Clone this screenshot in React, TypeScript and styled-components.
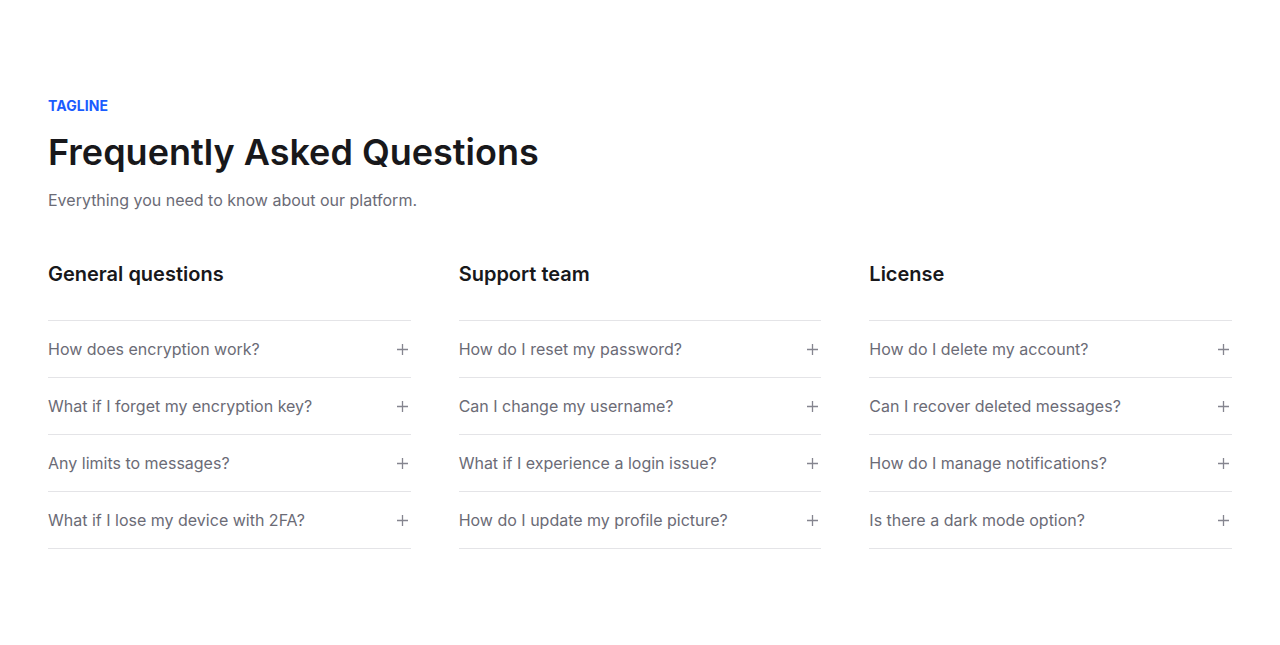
import React from "react";
import styled, { createGlobalStyle } from "styled-components";

const Global = createGlobalStyle`
  html, body { margin: 0; padding: 0; background: #ffffff; }
  body { font-family: Inter, "Noto Sans", sans-serif; -webkit-font-smoothing: antialiased; }
  * { box-sizing: border-box; }
`;

const Section = styled.section`
  padding: 96px 48px 96px;
  display: flex;
  flex-direction: column;
`;

const Tagline = styled.div`
  font-size: 14px;
  line-height: 20px;
  font-weight: 700;
  color: #1a5cff;
  letter-spacing: 0.1px;
`;

const Title = styled.h1`
  margin: 14px 0 0;
  font-size: 36px;
  line-height: 44px;
  font-weight: 600;
  color: #18181b;
  letter-spacing: 0;
`;

const Subtitle = styled.p`
  margin: 14px 0 0;
  font-size: 16px;
  line-height: 24px;
  color: #6b6b76;
`;

const Columns = styled.div`
  margin-top: 48px;
  display: grid;
  grid-template-columns: repeat(3, 1fr);
  column-gap: 48px;
`;

const Column = styled.div`
  display: flex;
  flex-direction: column;
`;

const ColumnTitle = styled.h2`
  margin: 0 0 32px;
  font-size: 20px;
  line-height: 28px;
  font-weight: 600;
  color: #18181b;
`;

const List = styled.div`
  display: flex;
  flex-direction: column;
  border-bottom: 1px solid #e4e4e7;
`;

const Row = styled.button`
  all: unset;
  box-sizing: border-box;
  cursor: pointer;
  display: flex;
  align-items: center;
  justify-content: space-between;
  height: 57px;
  border-top: 1px solid #e4e4e7;
  font-family: Inter, "Noto Sans", sans-serif;
  font-size: 16px;
  line-height: 24px;
  color: #6b6b76;
`;

const PlusIcon = styled.svg`
  width: 11px;
  height: 11px;
  margin-right: 3px;
  flex: none;
`;

const Plus = () => (
  <PlusIcon viewBox="0 0 11 11" fill="none">
    <path d="M5.5 0v11M0 5.5h11" stroke="#85858f" strokeWidth="1.3" />
  </PlusIcon>
);

const data = [
  {
    title: "General questions",
    items: [
      "How does encryption work?",
      "What if I forget my encryption key?",
      "Any limits to messages?",
      "What if I lose my device with 2FA?",
    ],
  },
  {
    title: "Support team",
    items: [
      "How do I reset my password?",
      "Can I change my username?",
      "What if I experience a login issue?",
      "How do I update my profile picture?",
    ],
  },
  {
    title: "License",
    items: [
      "How do I delete my account?",
      "Can I recover deleted messages?",
      "How do I manage notifications?",
      "Is there a dark mode option?",
    ],
  },
];

export default function App() {
  return (
    <>
      <Global />
      <Section>
        <Tagline>TAGLINE</Tagline>
        <Title>Frequently Asked Questions</Title>
        <Subtitle>Everything you need to know about our platform.</Subtitle>
        <Columns>
          {data.map((col) => (
            <Column key={col.title}>
              <ColumnTitle>{col.title}</ColumnTitle>
              <List>
                {col.items.map((q) => (
                  <Row key={q}>
                    <span>{q}</span>
                    <Plus />
                  </Row>
                ))}
              </List>
            </Column>
          ))}
        </Columns>
      </Section>
    </>
  );
}
